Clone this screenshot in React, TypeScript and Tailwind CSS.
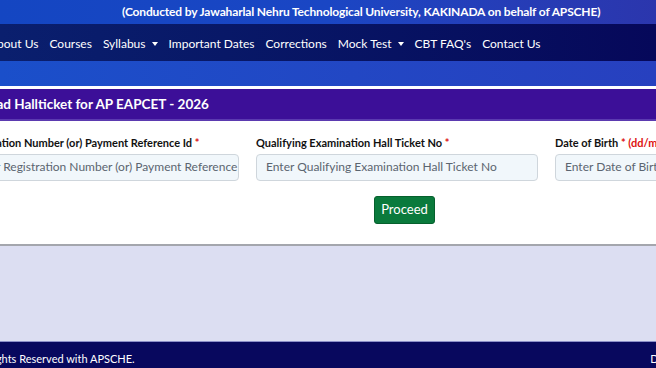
import React from "react";

function Caret() {
  return <span className="ml-[6px] inline-block w-0 h-0 border-l-[3px] border-r-[3px] border-t-[4px] border-l-transparent border-r-transparent border-t-white align-middle" />;
}

export default function App() {
  const font = { fontFamily: 'Lato, "Open Sans", sans-serif' };
  const inputCls = "h-[27px] rounded-[4px] border border-[#cfd6dc] bg-[#f1f7fb] flex items-center px-[9px] overflow-hidden text-[12px] text-[#5b6570]";
  const labelCls = "text-[11px] font-bold text-[#111]";
  return (
    <div className="w-[656px] h-[368px] overflow-hidden flex flex-col bg-[#dcdef2]" style={font}>
      <div className="h-[24px] shrink-0 bg-gradient-to-r from-[#1446c2] via-[#1a46c4] to-[#2b36ad] flex items-center pl-[122px] whitespace-nowrap">
        <span className="text-white font-bold text-[12px] tracking-[-0.15px]">(Conducted by Jawaharlal Nehru Technological University, KAKINADA on behalf of APSCHE)</span>
      </div>
      <div className="h-[37px] shrink-0 bg-gradient-to-r from-[#0a1f6e] to-[#06085a] flex items-center whitespace-nowrap text-white text-[12px]">
        <div className="flex items-center gap-[11px] -ml-[11px] pt-[2px]">
          <span>About Us</span>
          <span>Courses</span>
          <span className="flex items-center">Syllabus<Caret /></span>
          <span>Important Dates</span>
          <span>Corrections</span>
          <span className="flex items-center">Mock Test<Caret /></span>
          <span>CBT FAQ's</span>
          <span>Contact Us</span>
        </div>
      </div>
      <div className="h-[25px] shrink-0 bg-gradient-to-r from-[#1a4fca] to-[#2740bf]" />
      <div className="h-[3px] shrink-0 bg-white" />
      <div className="h-[32px] shrink-0 bg-[#3c0f98] border-b-[2px] border-[#5b3ab0] flex items-center whitespace-nowrap">
        <span className="-ml-[51px] text-white font-bold text-[13.5px]">Download Hallticket for AP EAPCET - 2026</span>
      </div>
      <div className="h-[125px] shrink-0 bg-white border-b-[2px] border-[#a4a6ad] flex flex-col">
        <div className="flex gap-[17px] -ml-[38px] pt-[14px] whitespace-nowrap">
          <div className="w-[277px] shrink-0 flex flex-col gap-[2px]">
            <label className={labelCls}>Registration Number (or) Payment Reference Id <span className="text-[#d11]">*</span></label>
            <div className={inputCls}>Enter Registration Number (or) Payment Reference Id</div>
          </div>
          <div className="w-[282px] shrink-0 flex flex-col gap-[2px]">
            <label className={labelCls}>Qualifying Examination Hall Ticket No <span className="text-[#d11]">*</span></label>
            <div className={inputCls}>Enter Qualifying Examination Hall Ticket No</div>
          </div>
          <div className="w-[282px] shrink-0 flex flex-col gap-[2px]">
            <label className={labelCls}>Date of Birth <span className="text-[#d11]">* (dd/mm/yyyy)</span></label>
            <div className={inputCls}>Enter Date of Birth</div>
          </div>
        </div>
        <div className="flex justify-center pl-[153px] pt-[15px]">
          <button className="w-[61px] h-[28px] rounded-[3px] bg-[#0a7a3c] border border-[#06602d] text-white text-[13px]">Proceed</button>
        </div>
      </div>
      <div className="flex-1" />
      <div className="h-[1px] shrink-0 bg-[#8c8fc8]" />
      <div className="h-[26px] shrink-0 bg-[#08085e] flex items-center justify-between pt-[8px] whitespace-nowrap text-white text-[11px]">
        <span className="-ml-[29px]">All Rights Reserved with APSCHE.</span>
        <span className="-mr-[164px]">Designed &amp; Developed by APSCHE</span>
      </div>
    </div>
  );
}
